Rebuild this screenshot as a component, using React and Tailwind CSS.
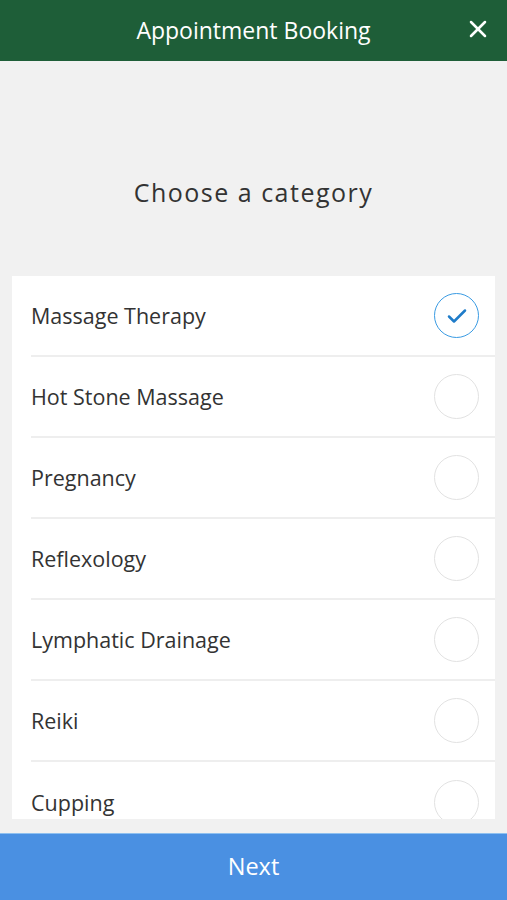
import { X } from 'lucide-react'

const categories = [
  'Massage Therapy',
  'Hot Stone Massage',
  'Pregnancy',
  'Reflexology',
  'Lymphatic Drainage',
  'Reiki',
  'Cupping',
]

function Radio({ checked }) {
  if (checked) {
    return (
      <div className="w-[45px] h-[45px] rounded-full border-[1.5px] border-[#3a9be3] flex items-center justify-center shrink-0">
        <svg width="24" height="24" viewBox="0 0 24 24" fill="none">
          <path d="M4 12.5l5 5L20 6.5" stroke="#1f7cc9" strokeWidth="2.5" strokeLinecap="round" strokeLinejoin="round" />
        </svg>
      </div>
    )
  }
  return <div className="w-[45px] h-[45px] rounded-full border-[1.5px] border-[#e2e2e2] shrink-0" />
}

export default function App() {
  const selected = 0
  return (
    <div className="h-[900px] w-full flex flex-col bg-[#f1f1f1]" style={{ fontFamily: "'Open Sans', sans-serif" }}>
      {/* Header */}
      <div className="h-[61px] bg-[#1e5e38] relative flex items-center justify-center shrink-0">
        <span className="text-white text-[23px]">Appointment Booking</span>
        <button className="absolute right-[15px] top-[15px] text-white">
          <X size={28} strokeWidth={2.2} />
        </button>
      </div>

      {/* Title */}
      <div className="pt-[114px] pb-[67px] text-center shrink-0">
        <h1 className="text-[25px] leading-[34px] text-[#333] tracking-[0.06em]">Choose a category</h1>
      </div>

      {/* List */}
      <div className="flex-1 min-h-0 mx-[12px] mb-[14px] bg-white overflow-hidden">
        {categories.map((c, i) => (
          <div key={c} className="pl-[19px]">
            <div className={`h-[81px] flex items-center justify-between pr-[16px] ${i < categories.length - 1 ? 'border-b-2 border-[#eeeeee]' : ''}`}>
              <span className="text-[21.5px] text-[#333] pt-[2px]">{c}</span>
              <Radio checked={i === selected} />
            </div>
          </div>
        ))}
      </div>

      {/* Next */}
      <button className="h-[67px] shrink-0 w-full bg-[#4a90e2] border-t border-[#8ec0f0] text-white text-[23.5px]">
        Next
      </button>
    </div>
  )
}
